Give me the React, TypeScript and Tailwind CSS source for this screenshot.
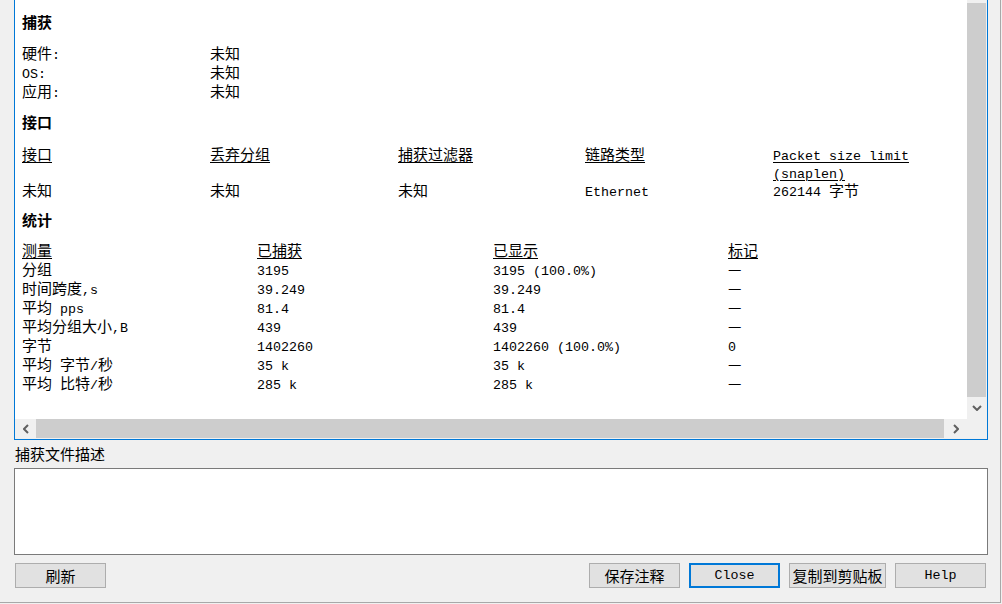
import React from "react";

const CJK = /([\u2E80-\u9FFF\uFF00-\uFFEF\u3000-\u303F\u2014]+)/;

function T({ text, bold }: { text: string; bold?: boolean }) {
  const parts = text.split(CJK).filter((p) => p.length > 0);
  return (
    <>
      {parts.map((p, i) =>
        CJK.test(p) ? (
          <span
            key={i}
            className={
              bold
                ? "font-['Noto_Sans_CJK_SC',sans-serif] text-[15px] font-bold"
                : "font-['Noto_Sans_CJK_SC',sans-serif] text-[15px]"
            }
          >
            {p}
          </span>
        ) : (
          <span key={i} className="font-['Liberation_Mono',monospace] text-[13.33px]">
            {p}
          </span>
        )
      )}
    </>
  );
}

function Cell({ text, u, h = 19 }: { text: string; u?: boolean; h?: 18 | 19 }) {
  return (
    <div className={h === 18 ? "h-[18px] leading-[18px] whitespace-pre" : "h-[19px] leading-[19px] whitespace-pre"}>
      {u ? (
        <span className="underline underline-offset-[2px] decoration-1">
          <T text={text} />
        </span>
      ) : (
        <T text={text} />
      )}
    </div>
  );
}

function Heading({ text }: { text: string }) {
  return (
    <div className="h-[19px] leading-[19px]">
      <T text={text} bold />
    </div>
  );
}

const stats: [string, string, string, string][] = [
  ["分组", "3195", "3195 (100.0%)", "—"],
  ["时间跨度,s", "39.249", "39.249", "—"],
  ["平均 pps", "81.4", "81.4", "—"],
  ["平均分组大小,B", "439", "439", "—"],
  ["字节", "1402260", "1402260 (100.0%)", "0"],
  ["平均 字节/秒", "35 k", "35 k", "—"],
  ["平均 比特/秒", "285 k", "285 k", "—"],
];

function Btn({ label, w, focus }: { label: string; w: string; focus?: boolean }) {
  return (
    <div
      className={
        (focus
          ? "border-2 border-[#0078d7] "
          : "border border-[#adadad] ") +
        w +
        " h-[25px] bg-[#e1e1e1] flex items-center justify-center leading-[19px] whitespace-pre"
      }
    >
      <T text={label} />
    </div>
  );
}

function Chevron({ dir }: { dir: "down" | "left" | "right" }) {
  const pts =
    dir === "down" ? "1,1 5,5 9,1" : dir === "left" ? "5,1 1,5 5,9" : "1,1 5,5 1,9";
  const w = dir === "down" ? 10 : 6;
  const h = dir === "down" ? 6 : 10;
  return (
    <svg width={w} height={h} viewBox={`0 0 ${w} ${h}`}>
      <polyline points={pts} fill="none" stroke="#606060" strokeWidth="2" strokeLinejoin="miter" />
    </svg>
  );
}

export default function App() {
  return (
    <div className="w-[1002px] h-[604px] bg-[#f0f0f0] overflow-hidden text-black font-['Noto_Sans_CJK_SC',sans-serif] text-[15px]">
      <div className="w-[1001px] h-[603px] border-r border-b border-[#a8a8a8] flex flex-col">
        {/* main panel */}
        <div className="ml-[14px] w-[974px] h-[440px] border-x border-b border-[#0078d7] bg-white flex">
          <div className="flex-1 flex flex-col min-w-0">
            <div className="h-[419px] overflow-hidden pl-[7px] pr-[6px] pt-[12px] flex flex-col">
              <Heading text="捕获" />
              <div className="mt-[12px] grid grid-cols-[188px_1fr]">
                <Cell text="硬件:" />
                <Cell text="未知" />
                <Cell text="OS:" />
                <Cell text="未知" />
                <Cell text="应用:" />
                <Cell text="未知" />
              </div>
              <div className="mt-[12px]">
                <Heading text="接口" />
              </div>
              <div className="mt-[14px] grid grid-cols-[188px_188px_187px_188px_1fr]">
                <div>
                  <Cell h={18} u text="接口" />
                  <Cell h={18} text="" />
                  <Cell h={18} text="未知" />
                </div>
                <div>
                  <Cell h={18} u text="丢弃分组" />
                  <Cell h={18} text="" />
                  <Cell h={18} text="未知" />
                </div>
                <div>
                  <Cell h={18} u text="捕获过滤器" />
                  <Cell h={18} text="" />
                  <Cell h={18} text="未知" />
                </div>
                <div>
                  <Cell h={18} u text="链路类型" />
                  <Cell h={18} text="" />
                  <Cell h={18} text="Ethernet" />
                </div>
                <div>
                  <Cell h={18} u text="Packet size limit" />
                  <Cell h={18} u text="(snaplen)" />
                  <Cell h={18} text="262144 字节" />
                </div>
              </div>
              <div className="mt-[11px]">
                <Heading text="统计" />
              </div>
              <div className="mt-[11px] grid grid-cols-[235px_236px_235px_1fr]">
                <Cell u text="测量" />
                <Cell u text="已捕获" />
                <Cell u text="已显示" />
                <Cell u text="标记" />
                {stats.map((r) => (
                  <React.Fragment key={r[0]}>
                    <Cell text={r[0]} />
                    <Cell text={r[1]} />
                    <Cell text={r[2]} />
                    <Cell text={r[3]} />
                  </React.Fragment>
                ))}
              </div>
            </div>
            {/* horizontal scrollbar */}
            <div className="h-[20px] bg-[#f0f0f0] flex">
              <div className="w-[21px] h-[19px] flex items-center justify-center">
                <Chevron dir="left" />
              </div>
              <div className="w-[908px] h-[19px] bg-[#cdcdcd]" />
              <div className="flex-1 h-[19px] flex items-center justify-center">
                <Chevron dir="right" />
              </div>
            </div>
          </div>
          {/* vertical scrollbar */}
          <div className="w-[20px] bg-[#f0f0f0] flex flex-col">
            <div className="h-[3px]" />
            <div className="h-[394px] w-[19px] bg-[#cdcdcd]" />
            <div className="h-[22px] w-[19px] flex items-center justify-center">
              <Chevron dir="down" />
            </div>
          </div>
        </div>

        {/* description label */}
        <div className="h-[28px] pl-[15px] pt-[4px] leading-[19px]">
          <T text="捕获文件描述" />
        </div>
        <div className="ml-[14px] w-[974px] h-[87px] border border-[#7a7a7a] bg-white" />

        {/* buttons */}
        <div className="mt-[8px] pl-[15px] pr-[14px] flex">
          <Btn label="刷新" w="w-[91px]" />
          <div className="ml-auto flex gap-[9px]">
            <Btn label="保存注释" w="w-[91px]" />
            <Btn label="Close" w="w-[91px]" focus />
            <Btn label="复制到剪贴板" w="w-[97px]" />
            <Btn label="Help" w="w-[91px]" />
          </div>
        </div>
      </div>
    </div>
  );
}
